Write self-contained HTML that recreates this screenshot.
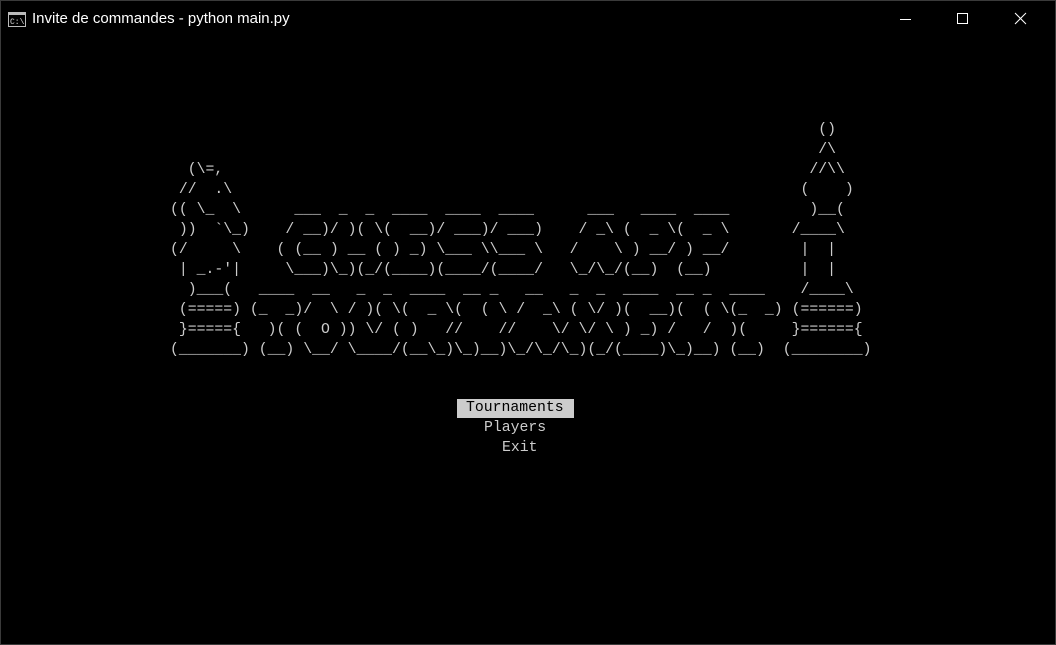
<!DOCTYPE html>
<html><head><style>
body{margin:0;width:1056px;height:645px;background:#000;overflow:hidden;position:relative;font-family:"Liberation Sans",sans-serif}
#frame{position:absolute;left:0;top:0;width:1054px;height:643px;border:1px solid #3a3a3a}
.t{position:absolute;left:32px;top:10px;color:#fff;font-size:15px}
.s{position:absolute;font-family:"Liberation Mono",monospace;font-size:14.8px;line-height:20px;color:#ccc;white-space:pre}
</style></head><body>
<div id="frame"></div>
<svg style="position:absolute;left:8px;top:12px" width="18" height="15"><rect x="0.5" y="0.5" width="17" height="14" fill="#000" stroke="#bbb"/><rect x="1" y="1" width="16" height="2" fill="#bbb"/><text x="2" y="12" font-size="8" fill="#ddd" font-family="Liberation Mono">C:\</text></svg>
<div class="t">Invite de commandes - python  main.py</div>
<svg style="position:absolute;left:895px;top:10px" width="140" height="20" stroke="#fff" stroke-width="1" fill="none"><line x1="5" y1="9.5" x2="16" y2="9.5"/><rect x="62.5" y="3.5" width="10" height="10"/><line x1="120" y1="3" x2="131" y2="14"/><line x1="131" y1="3" x2="120" y2="14"/></svg>

<div class="s" style="left:170px;top:120px">                                                                         ()
                                                                         /\
  (\=,                                                                  //\\
 //  .\                                                                (    )
(( \_  \      ___  _  _  ____  ____  ____      ___   ____  ____         )__(
 ))  `\_)    / __)/ )( \(  __)/ ___)/ ___)    / _\ (  _ \(  _ \       /____\
(/     \    ( (__ ) __ ( ) _) \___ \\___ \   /    \ ) __/ ) __/        |  |
 | _.-'|     \___)\_)(_/(____)(____/(____/   \_/\_/(__)  (__)          |  |
  )___(   ____  __   _  _  ____  __ _   __   _  _  ____  __ _  ____    /____\
 (=====) (_  _)/  \ / )( \(  _ \(  ( \ /  _\ ( \/ )(  __)(  ( \(_  _) (======)
 }====={   )( (  O )) \/ ( )   //    //    \/ \/ \ ) _) /   /  )(     }======{
(_______) (__) \__/ \____/(__\_)\_)__)\_/\_/\_)(_/(____)\_)__) (__)  (________)</div>

<div style="position:absolute;left:457px;top:399px;width:117px;height:19px;background:#ccc"></div>
<div class="s" style="left:466px;top:398px;color:#000">Tournaments</div>
<div class="s" style="left:484px;top:418px">Players</div>
<div class="s" style="left:502px;top:438px">Exit</div>
</body></html>
